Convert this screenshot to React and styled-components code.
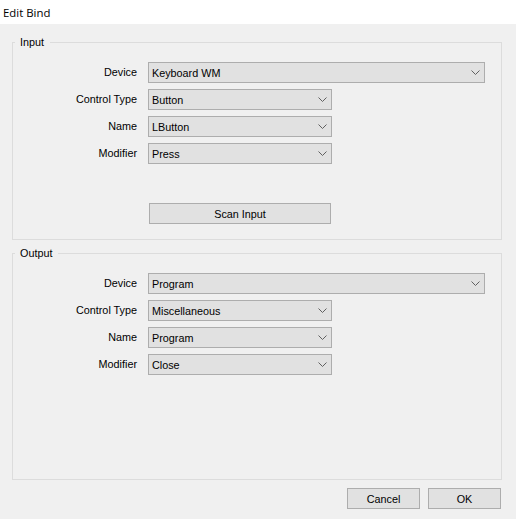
import React from 'react';
import styled, { createGlobalStyle } from 'styled-components';

const Global = createGlobalStyle`
  html, body {
    margin: 0;
    padding: 0;
    background: #f0f0f0;
  }
  body {
    font-family: "Liberation Sans", Arial, sans-serif;
    font-size: 10.8px;
    color: #000;
  }
`;

const Window = styled.div`
  display: flex;
  flex-direction: column;
  height: 519px;
  width: 516px;
  overflow: hidden;
`;

const TitleBar = styled.div`
  height: 24px;
  background: #fff;
  display: flex;
  align-items: center;
  padding-left: 3px;
  font-family: "Open Sans", "Noto Sans", sans-serif;
  font-size: 11.4px;
  flex-shrink: 0;
`;

const Body = styled.div`
  flex: 1;
  display: flex;
  flex-direction: column;
  gap: 7px;
  padding: 12px 14px 10px 12px;
`;

const Group = styled.fieldset`
  margin: 0;
  padding: 0 0 ${p => p.$bottom || 0}px 0;
  border: 1px solid #dcdcdc;
  flex: ${p => (p.$grow ? 1 : 'none')};
  min-width: 0;
`;

const Legend = styled.legend`
  margin-left: 2px;
  padding: 0 6px 0 5px;
  line-height: 13px;
`;

const Rows = styled.div`
  display: grid;
  grid-template-columns: 124px auto;
  column-gap: 11px;
  row-gap: 6px;
  padding-top: 13px;
  align-items: center;
  justify-items: start;
`;

const Label = styled.div`
  justify-self: end;
  line-height: 21px;
`;

const Combo = styled.div`
  box-sizing: border-box;
  width: ${p => (p.$wide ? 337 : 184)}px;
  height: 21px;
  background: #e1e1e1;
  border: 1px solid #adadad;
  display: flex;
  align-items: center;
  justify-content: space-between;
  padding: 0 4px 0 3px;
`;

const Chevron = () => (
  <svg width="9" height="5" viewBox="0 0 9 5">
    <polyline points="0.5,0.5 4.5,4.5 8.5,0.5" fill="none" stroke="#606060" strokeWidth="1" />
  </svg>
);

const Button = styled.div`
  box-sizing: border-box;
  width: ${p => p.$w || 73}px;
  height: 21px;
  background: #e1e1e1;
  border: 1px solid #adadad;
  display: flex;
  align-items: center;
  justify-content: center;
`;

const ScanRow = styled.div`
  grid-column: 2;
  margin-top: 33px;
  margin-left: 1px;
`;

const Footer = styled.div`
  display: flex;
  justify-content: flex-end;
  gap: 8px;
  padding-top: 1px;
  padding-right: 1px;
`;

const Field = ({ label, value, wide }) => (
  <>
    <Label>{label}</Label>
    <Combo $wide={wide}>
      <span>{value}</span>
      <Chevron />
    </Combo>
  </>
);

export default function App() {
  return (
    <Window>
      <Global />
      <TitleBar>Edit Bind</TitleBar>
      <Body>
        <Group $bottom={15}>
          <Legend>Input</Legend>
          <Rows>
            <Field label="Device" value="Keyboard WM" wide />
            <Field label="Control Type" value="Button" />
            <Field label="Name" value="LButton" />
            <Field label="Modifier" value="Press" />
            <ScanRow>
              <Button $w={182}>Scan Input</Button>
            </ScanRow>
          </Rows>
        </Group>
        <Group $grow>
          <Legend>Output</Legend>
          <Rows>
            <Field label="Device" value="Program" wide />
            <Field label="Control Type" value="Miscellaneous" />
            <Field label="Name" value="Program" />
            <Field label="Modifier" value="Close" />
          </Rows>
        </Group>
        <Footer>
          <Button>Cancel</Button>
          <Button>OK</Button>
        </Footer>
      </Body>
    </Window>
  );
}
